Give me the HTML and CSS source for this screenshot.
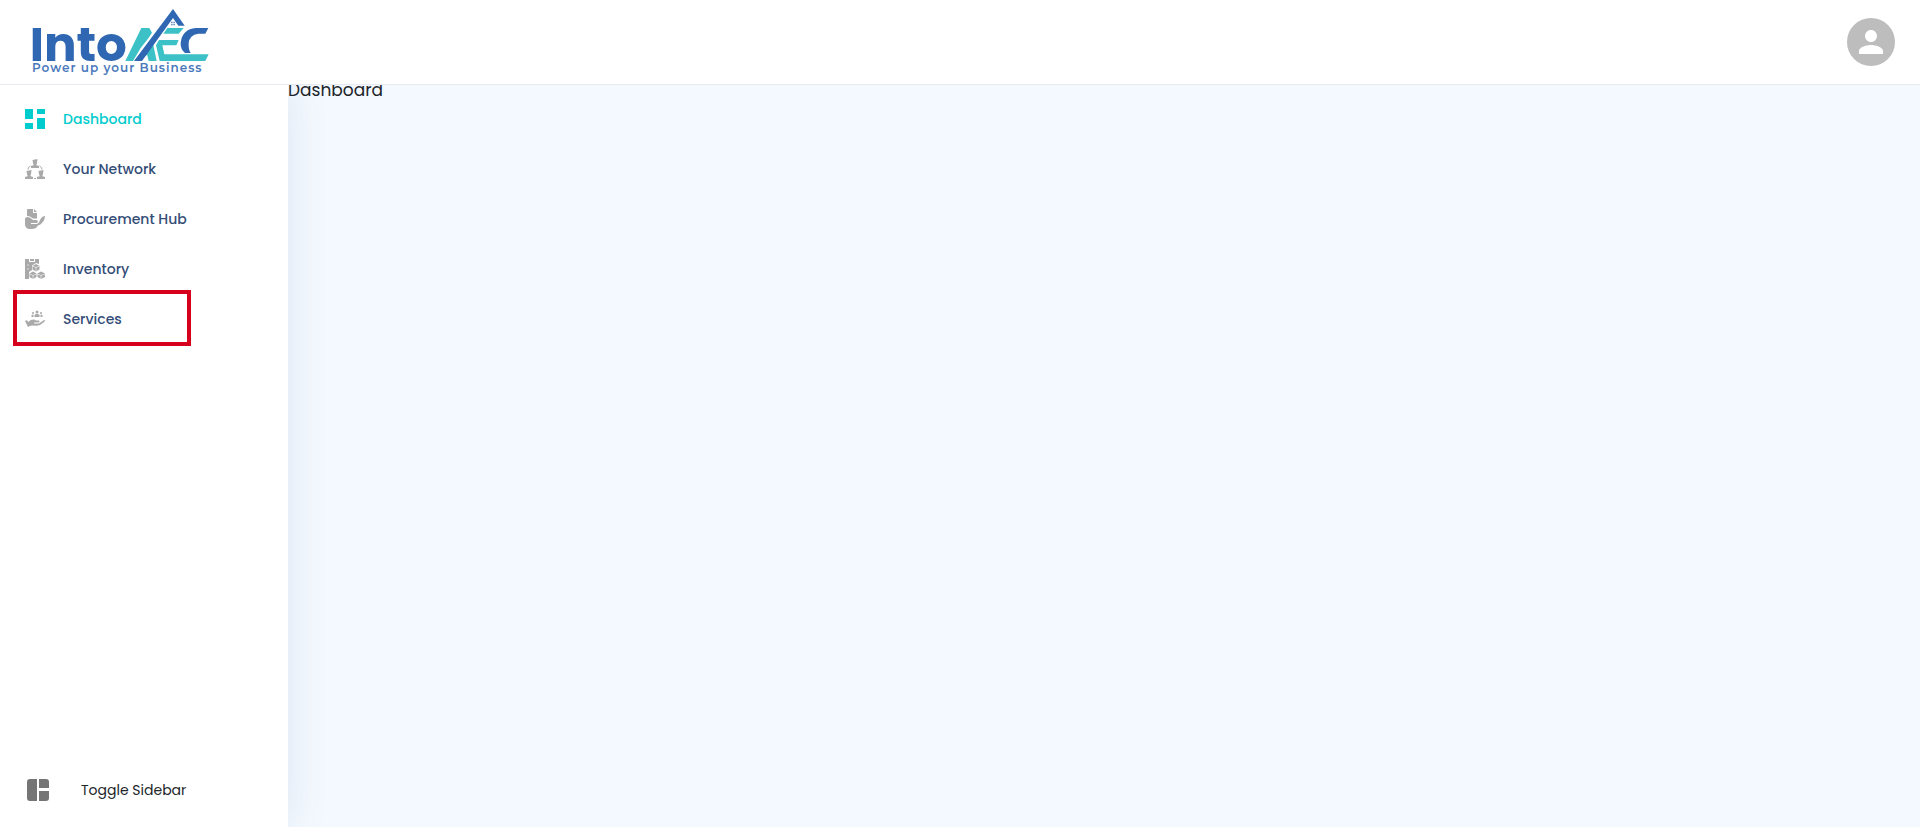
FILE: index.html
```html
<!DOCTYPE html>
<html lang="en">
<head>
<meta charset="utf-8">
<meta name="viewport" content="width=device-width, initial-scale=1">
<title>IntoAEC Dashboard</title>
<link rel="stylesheet" href="styles.css">
</head>
<body>
<header class="topbar">
  <a class="logo" href="#" aria-label="IntoAEC home">
    <svg viewBox="0 0 600 240" width="200" height="80">
      <text class="logo-name" x="29" y="183">Into</text>
      <g fill="#3bc1c6">
        <path d="M316 183 364 84H388L396 98 384 116 362 144 339 183Z"/>
        <path d="M382 134 396 116 410 183H386L382 166H362L376 146H385Z"/>
        <path d="M442 84H491L476 101H430Z"/>
        <path d="M417 120H476L469 136H427L433 163H566L556 183H419L408 136Z"/>
      </g>
      <g fill="#2f67b2">
        <path d="M342 183 459 27 494 77H475L459 54 366 183Z"/>
        <path d="M565 84 556 101H535Q508 104 506 130 505 150 512 159H495Q481 147 482 128 487 87 528 84Z"/>
        <path d="M453 65h5v5h-5zM460 65h5v5h-5zM453 72h5v4h-5zM460 72h5v4h-5z" opacity=".7"/>
      </g>
      <text class="logo-tag" x="36" y="216">Power up your Business</text>
    </svg>
  </a>
  <button class="avatar" type="button" aria-label="Account">
    <svg viewBox="0 0 24 24" width="36" height="36" fill="currentColor"><path d="M12 12c2.21 0 4-1.79 4-4s-1.79-4-4-4-4 1.79-4 4 1.79 4 4 4zm0 2c-2.67 0-8 1.34-8 4v2h16v-2c0-2.66-5.33-4-8-4z"/></svg>
  </button>
</header>
<div class="shell">
  <aside class="sidebar">
    <nav class="menu">
      <a class="item active" href="#">
        <svg class="icon" viewBox="0 0 20 20"><path d="M0 0h8v10H0zM12 0h8v5h-8zM0 14h8v6H0zM12 9h8v11h-8z"/></svg>
        <span>Dashboard</span>
      </a>
      <a class="item" href="#">
        <svg class="icon" viewBox="0 0 20 20"><path d="M7.500 1 12.500 0 12 4Q12 5.500 11 6L14 7V9H6V7L9 6Q8 5.500 8 4ZM1.500 12 6.500 11 6 15Q6 16.500 5 17L8 18V20H0V18L3 17Q2 16.500 2 15ZM13.500 12 18.500 11 18 15Q18 16.500 17 17L20 18V20H12V18L15 17Q14 16.500 14 15ZM9 19h2v1H9z"/><path d="M5.500 7Q3 8 3 10.500M14.500 7Q17 8 17 10.500" fill="none" stroke="currentColor"/></svg>
        <span>Your Network</span>
      </a>
      <a class="item" href="#">
        <svg class="icon" viewBox="0 0 20 20"><path d="M2 1Q2 0 3 0H8V4H12V9.500H8Q5 6.500 2 7ZM9 0 12 3H9ZM0 10Q0 8 3 8 5 8 8 11H11Q13 11 13 12.500T11 14H6V15H11Q14 15 15 11 17 7 20 7 20 11 17 14 15 16 13 16.500 11 20 7 20H5Q0 20 0 15Z"/></svg>
        <span>Procurement Hub</span>
      </a>
      <a class="item" href="#">
        <svg class="icon" viewBox="0 0 20 20"><path d="M0 0H4V3H10V0H14V5L11 4 7 6.500V11L4 13V20H0ZM5 0H9V2H5Z"/><path d="M11 5 14.500 7V10.500L11 12.500 7.500 10.500V7ZM8 12.500 11.500 14.500V18L8 20 4.500 18V14.500ZM16 12.500 20 14.500V18L16 20 12.500 18V14.500Z"/><path d="M7.500 7 11 8.500 14.500 7M11 8.500V12.500M4.500 15 8 16.500 11.500 15M8 16.500V20M12.500 15 16 16.500 20 15M16 16.500V20M2 6h2M2 10h2" stroke="#fff" stroke-width=".6" fill="none"/></svg>
        <span>Inventory</span>
      </a>
      <a class="item marked" href="#">
        <svg class="icon" viewBox="0 0 20 20"><circle cx="12" cy="3" r="1.500"/><circle cx="8" cy="4" r="1"/><circle cx="16" cy="4" r="1"/><path d="M9.500 8V6Q10 5 12 5T14.500 6V8ZM6.500 8V6L8.500 5.500V8ZM17.500 8V6L15.500 5.500V8ZM0 12 2 11 5 17 3 18ZM3 13Q8 9 11 11.500H14Q15 12.500 14 13.500H9V14.500H14L19 11Q21 11 19 13L15 16Q13 17 7 16.500L5 17Z"/></svg>
        <span>Services</span>
      </a>
    </nav>
    <button class="toggle" type="button">
      <svg viewBox="0 0 22 22" width="22" height="22" fill="currentColor"><path d="M3 0H10V22H3Q0 22 0 19V3Q0 0 3 0ZM12 0H19Q22 0 22 3V9H12ZM12 12H22V19Q22 22 19 22H12Z"/></svg>
      <span>Toggle Sidebar</span>
    </button>
  </aside>
  <main class="content">Dashboard</main>
</div>
</body>
</html>
```
FILE: styles.css
```css
*, *::after { box-sizing: border-box; }
body {
  margin: 0;
  min-height: 100vh;
  display: flex;
  flex-direction: column;
  font-family: Poppins, Inter, sans-serif;
  font-size: 14px;
  color: #212529;
  background: #fff;
}
button { border: 0; font: inherit; cursor: pointer; }
svg { display: block; flex: none; }
.topbar {
  position: relative;
  z-index: 1;
  display: flex;
  align-items: center;
  justify-content: space-between;
  padding: 0 25px 4px 20px;
  border-bottom: 1px solid #e7eaee;
  background: #fff;
}
.logo-name { font-size: 145px; font-weight: 700; fill: #2f67b2; }
.logo-tag {
  font-family: Montserrat, Poppins, sans-serif;
  font-size: 36px;
  font-weight: 600;
  letter-spacing: 3px;
  fill: #4a79bb;
}
.avatar {
  display: grid;
  place-items: center;
  width: 48px;
  height: 48px;
  margin-top: 4px;
  padding: 0;
  border-radius: 50%;
  background: #bdbdbd;
  color: #fff;
}
.shell { flex: 1; display: flex; }
.sidebar {
  width: 288px;
  flex: none;
  display: flex;
  flex-direction: column;
  justify-content: space-between;
  padding: 9px 0 12px;
  background: #fff;
  box-shadow: 0 0 40px rgba(70, 90, 140, .12);
  clip-path: inset(0 -48px 0 0);
}
.menu { display: flex; flex-direction: column; }
.item {
  position: relative;
  display: flex;
  align-items: center;
  gap: 18px;
  height: 50px;
  padding-left: 25px;
  color: #344d77;
  font-weight: 500;
  text-decoration: none;
}
.icon { width: 20px; height: 20px; fill: currentColor; color: #a9a9a9; }
.active, .active .icon { color: #00cccd; }
.marked::after {
  content: "";
  position: absolute;
  inset: -4px auto -2px 13px;
  width: 178px;
  border: 4px solid #d6001c;
}
.toggle {
  display: flex;
  align-items: center;
  gap: 32px;
  height: 50px;
  padding: 0 0 0 27px;
  background: none;
  color: #212529;
}
.toggle svg { color: #757575; }
.content {
  flex: 1;
  background: #f4f9ff;
  font-size: 17px;
  line-height: 10px;
}
```
